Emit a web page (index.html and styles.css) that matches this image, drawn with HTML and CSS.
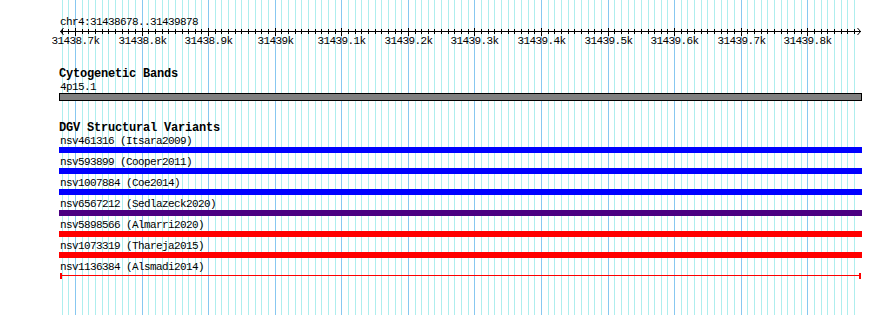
FILE: index.html
```html
<!DOCTYPE html>
<html>
<head>
    <title>chr4:31438678..31439878</title>
    <link rel="stylesheet" href="styles.css">
</head>
<body>
    <div class="panel">
        <svg class="ruler" id="ruler" width="890" height="315">
            <g id="grid"></g>
            <text class="ref-label" x="60" y="25">chr4:31438678..31439878</text>
            <g id="axis">
                <rect x="60" y="31" width="801" height="1" fill="#000"/>
                <path d="M63.5 28 L60.5 31.5 L63.5 35 M857.5 28 L860.5 31.5 L857.5 35" stroke="#000" stroke-width="1" fill="none"/>
            </g>
        </svg>

        <div class="tracks">
            <section class="track cyto">
                <div class="track-title">Cytogenetic Bands</div>
                <div class="feature-label">4p15.1</div>
                <div class="band"></div>
            </section>

            <section class="track dgv">
                <div class="track-title">DGV Structural Variants</div>
                <div class="feature-label">nsv461316 (Itsara2009)</div>
                <div class="bar loss"></div>
                <div class="feature-label">nsv593899 (Cooper2011)</div>
                <div class="bar loss"></div>
                <div class="feature-label">nsv1007884 (Coe2014)</div>
                <div class="bar loss"></div>
                <div class="feature-label">nsv6567212 (Sedlazeck2020)</div>
                <div class="bar complex"></div>
                <div class="feature-label">nsv5898566 (Almarri2020)</div>
                <div class="bar gain"></div>
                <div class="feature-label">nsv1073319 (Thareja2015)</div>
                <div class="bar gain"></div>
                <div class="feature-label">nsv1136384 (Alsmadi2014)</div>
                <div class="bar span"></div>
            </section>
        </div>
    </div>

    <script src="script.js"></script>
</body>
</html>
```

FILE: styles.css
```css
body {
    margin: 0;
    background: #fff;
    color: #000;
    font-family: "Liberation Mono", "DejaVu Sans Mono", monospace;
}
.panel {
    position: relative;
    width: 890px;
    height: 315px;
    overflow: hidden;
}
.ruler {
    position: absolute;
    top: 0;
    left: 0;
}
.ruler text {
    font-family: "Liberation Mono", monospace;
    font-size: 11px;
    letter-spacing: -0.6px;
    fill: #000;
}
.grid-minor { fill: #aeeeee; }
.grid-major { fill: #87c8f0; }

.tracks {
    position: relative;
    width: 803px;
    padding: 68px 0 0 59px;
}
.track-title {
    height: 13px;
    line-height: 13px;
    font-size: 12px;
    font-weight: bold;
    letter-spacing: -0.2px;
}
.feature-label {
    height: 12px;
    line-height: 12px;
    font-size: 11px;
    letter-spacing: -0.6px;
    padding-left: 1px;
}
.band {
    height: 6px;
    background: #808080;
    border: 1px solid #000;
}
.dgv {
    margin-top: 21px;
}
.bar {
    height: 6px;
    margin-bottom: 3px;
}
.bar.loss { background: #0000ff; }
.bar.complex { background: #4b0082; }
.bar.gain { background: #ff0000; }
.bar.span {
    box-sizing: border-box;
    margin: 0 1px;
    border-left: 2px solid #f00;
    border-right: 2px solid #f00;
    background: linear-gradient(#f00, #f00) no-repeat 0 2px / 100% 1px;
}
```

FILE: script.js
```javascript
// grid lines + ruler ticks, one every 10bp, labelled every 100bp
var NS = 'http://www.w3.org/2000/svg';
var grid = document.getElementById('grid');
var axis = document.getElementById('axis');

function xOf(bp) {
    return Math.round(75 + (bp - 31438700) * 0.6657);
}

function rect(parent, x, y, w, h, cls) {
    var r = document.createElementNS(NS, 'rect');
    r.setAttribute('x', x);
    r.setAttribute('y', y);
    r.setAttribute('width', w);
    r.setAttribute('height', h);
    if (cls) r.setAttribute('class', cls);
    else r.setAttribute('fill', '#000');
    parent.appendChild(r);
}

for (var bp = 31438680; bp <= 31439870; bp += 10) {
    var x = xOf(bp);
    var major = bp % 100 === 0;
    rect(grid, x, 0, 1, 315, major ? 'grid-major' : 'grid-minor');
    if (major) {
        rect(axis, x, 28, 1, 8);
        var t = document.createElementNS(NS, 'text');
        t.setAttribute('x', x + 0.5);
        t.setAttribute('y', 44);
        t.setAttribute('text-anchor', 'middle');
        t.textContent = (bp / 1000).toFixed(bp % 1000 === 0 ? 0 : 1) + 'k';
        axis.appendChild(t);
    } else {
        rect(axis, x, 29, 1, 5);
    }
}
```
